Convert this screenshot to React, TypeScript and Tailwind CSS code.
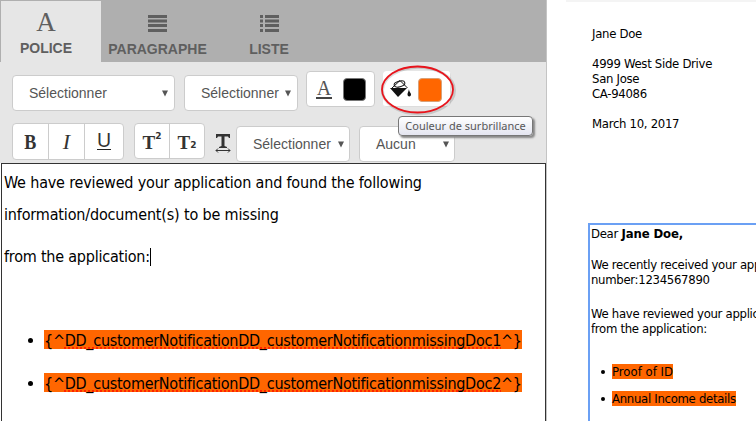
import type { ReactNode } from "react";

const tahoma = "font-['DejaVu_Sans_Condensed','DejaVu_Sans',sans-serif] [font-stretch:condensed]";

function Select({ label, className, pad = "pl-4", arrow = "mr-[5px]" }: { label: string; className: string; pad?: string; arrow?: string }) {
  return (
    <div className={`flex h-9 shrink-0 items-center justify-between rounded border border-[#ccc] bg-white ${pad} ${className}`}>
      <span className="text-[14px] leading-5 text-[#555]">{label}</span>
      <svg className={arrow} width="6" height="7" viewBox="0 0 6 7">
        <path d="M0 0.5H6L3 6.5Z" fill="#555" />
      </svg>
    </div>
  );
}

function Tab({ icon, label, className }: { icon: ReactNode; label: string; className: string }) {
  return (
    <div className={`flex shrink-0 flex-col items-center text-[14px] font-bold text-[#5f5f5f] ${className}`}>
      {icon}
      <span className="leading-4 whitespace-nowrap">{label}</span>
    </div>
  );
}

function Token({ n }: { n: number }) {
  return (
    <li className="flex h-[19px] items-center">
      <span className="mt-[2px] mr-[11px] size-[5px] rounded-full bg-black" />
      <span className="flex h-[19px] items-center bg-[#ff6600] pt-[2px] whitespace-nowrap tracking-[-0.27px]">
        <span>{"{^"}</span>
        <span className="underline decoration-[#ff2200] decoration-dotted decoration-2 underline-offset-[2px] [text-decoration-skip-ink:none]">
          DD_customerNotificationDD_customerNotificationmissingDoc{n}
        </span>
        <span>{"^}"}</span>
      </span>
    </li>
  );
}

function Toolbar() {
  return (
    <div className="h-[101px] bg-[#e6e6e6]">
      <div className="flex h-[59px] items-start pt-[9px] pl-3">
        <Select label="Sélectionner" className="mt-1 w-[163px]" arrow="mr-[6px]" />
        <Select label="Sélectionner" className="mt-1 ml-[9px] w-[114px]" arrow="mr-[6px]" />
        <div className="ml-2 flex h-9 w-[69px] items-center rounded border border-[#ccc] bg-white pl-[9px]">
          <span className="mt-[2px] flex h-[18px] w-4 flex-col items-center border-b-2 border-[#444] font-['Liberation_Serif',serif] text-[20px] leading-[15px] text-[#555]">A</span>
          <span className="ml-[11px] size-[23px] rounded border border-[#777] bg-black" />
        </div>
        <div className="relative ml-2 flex h-9 w-[68px] items-center rounded bg-white pl-[7px] shadow-[inset_-1px_-1px_0_#ddd]">
          <svg width="22" height="20" viewBox="0 0 22 20">
            <path d="M2 9L10 1.500L17.500 9" fill="none" stroke="#111" />
            <ellipse cx="9.500" cy="5" rx="5.500" ry="2.800" fill="none" stroke="#111" transform="rotate(-15 9.500 5)" />
            <path d="M0 9H17L8 18ZM19 10C19 13 21 13.500 21 15.500C21 18 17.500 18 17.500 15.500C17.500 14 18.500 12.500 19 10Z" fill="#111" />
          </svg>
          <span className="mt-[2px] ml-[6px] size-[24px] rounded border border-[#d8a078] bg-[#ff6600]" />
          <svg className="absolute -top-[7px] -left-[3px]" width="80" height="52" viewBox="0 0 80 52">
            <ellipse cx="38.500" cy="26.500" rx="36" ry="23.300" fill="none" stroke="#0002" strokeWidth="3" />
            <ellipse cx="37.500" cy="25.500" rx="35.500" ry="23" fill="none" stroke="#e8141c" strokeWidth="1.800" />
          </svg>
          <div className="absolute top-[45px] left-[15px] z-10 flex h-[20px] w-[135px] items-center justify-center rounded-sm border border-[#777] bg-linear-to-b from-white to-[#e4e5f0] font-['Noto_Sans',sans-serif] text-[11px] whitespace-nowrap text-[#575757] shadow-[2px_2px_2px_#888]">
            Couleur de surbrillance
          </div>
        </div>
      </div>
      <div className="flex items-start pt-[2px] pl-3">
        <div className="flex h-[37px] w-[112px] divide-x divide-[#ccc] rounded border border-[#ccc] bg-white text-[#333]">
          <span className="flex w-9 items-center justify-center font-['Liberation_Serif',serif] text-[22px] font-bold">
            <span className="scale-x-[.82]">B</span>
          </span>
          <span className="flex w-9 items-center justify-center font-['Liberation_Serif',serif] text-[22px] italic">I</span>
          <span className="flex w-[38px] justify-center pt-[6px] font-['Noto_Sans',sans-serif] text-[20px] leading-[20px]">
            <span className="h-[20px] border-b border-[#222]">U</span>
          </span>
        </div>
        <div className="ml-[10px] flex h-9 w-[71px] divide-x divide-[#ccc] rounded border border-[#ccc] bg-white font-['Liberation_Serif',serif] font-bold text-[#333]">
          <span className="flex w-[35px] justify-center pt-[7px] text-[19px] leading-6">
            T<span className="font-['DejaVu_Sans',sans-serif] text-[9px] leading-[11px]">2</span>
          </span>
          <span className="flex flex-1 justify-center pt-[7px] text-[19px] leading-6">
            T<span className="pt-[9px] font-['DejaVu_Sans',sans-serif] text-[9px] leading-[11px]">2</span>
          </span>
        </div>
        <svg className="mt-[11px] ml-[10px]" width="17" height="19" viewBox="0 0 17 19">
          <path d="M1 0H15V4H14L13 2.500H9.500V12L12 13V14H4V13L6.500 12V2.500H3L2 4H1Z" fill="#333" />
          <path d="M1 16.500H15M3 14.500L1 16.500L3 18.500M13 14.500L15 16.500L13 18.500" stroke="#333" fill="none" />
        </svg>
        <Select label="Sélectionner" className="mt-[3px] ml-[4px] w-[114px]" arrow="mr-[5px]" />
        <Select label="Aucun" className="mt-[3px] ml-[9px] w-[96px]" pad="pl-4" />
      </div>
    </div>
  );
}

export default function App() {
  return (
    <div className="flex h-[421px] w-[756px] overflow-hidden bg-white font-['Liberation_Sans',Arial,sans-serif]">
      <section className="w-[547px] shrink-0 border-r border-[#c4c4c4]">
        <div className="flex h-[62px] bg-[#afafaf] pt-px pl-px">
          <Tab
            label="POLICE"
            className="w-[100px] bg-[#e6e6e6] pt-[8px] pr-[10px]"
            icon={<span className="mb-[1px] h-[30px] font-['Liberation_Serif',serif] text-[27px] leading-[26px] font-normal">A</span>}
          />
          <Tab
            label="PARAGRAPHE"
            className="w-[113px] pt-[14px]"
            icon={
              <svg className="mb-[9px] shrink-0" width="19" height="17" viewBox="0 0 19 17">
                <path d="M0 1.500H19M0 6H19M0 10.500H19M0 15.500H19" stroke="#5f5f5f" strokeWidth="3" />
              </svg>
            }
          />
          <Tab
            label="LISTE"
            className="w-[110px] pt-[14px]"
            icon={
              <svg className="mb-[9px] shrink-0" width="19" height="17" viewBox="0 0 19 17">
                <path d="M0 1.500H3M0 6H3M0 10.500H3M0 15.500H3M5 1.500H19M5 6H19M5 10.500H19M5 15.500H19" stroke="#5f5f5f" strokeWidth="3" />
              </svg>
            }
          />
        </div>
        <Toolbar />
        <div className={`ml-px h-[260px] border border-b-0 border-[#333] bg-white pt-[3px] pl-[2px] text-[16px] tracking-[-0.18px] text-black ${tahoma}`}>
          <p className="h-8 leading-8 whitespace-nowrap">We have reviewed your application and found the following</p>
          <p className="h-8 leading-8 tracking-[-0.16px] whitespace-nowrap">information/document(s) to be missing</p>
          <p className="mt-[10px] flex h-8 items-center tracking-[-0.22px] whitespace-nowrap">
            <span>from the application:</span>
            <span className="h-[18px] w-px bg-black" />
          </p>
          <ul className="mt-[57px] flex flex-col gap-6 pl-6">
            <Token n={1} />
            <Token n={2} />
          </ul>
        </div>
      </section>
      <section className={`w-[209px] pl-[19px] text-[13px] leading-[15px] tracking-[-0.3px] whitespace-nowrap text-black ${tahoma}`}>
        <div className="h-[2px] bg-[#f4f4f4]" />
        <div className="h-[221px] pt-[24px] pl-[26px]">
          <p>Jane Doe</p>
          <p className="mt-[15px]">4999 West Side Drive</p>
          <p>San Jose</p>
          <p>CA-94086</p>
          <p className="mt-[15px]">March 10, 2017</p>
        </div>
        <div className="ml-[22px] h-[198px] border-t-2 border-l-2 border-[#6ba0f4] pt-[1px] pl-px">
          <p>Dear <b className="tracking-[-0.1px]">Jane Doe,</b></p>
          <p className="mt-[16px]">We recently received your app</p>
          <p>number:1234567890</p>
          <p className="mt-[19px]">We have reviewed your applic</p>
          <p>from the application:</p>
          <ul className="mt-[28px] flex flex-col gap-3 pl-[10px]">
            <li className="flex items-center">
              <span className="mr-[7px] size-1 rounded-full bg-black" />
              <span className="bg-[#ff6600] tracking-normal">Proof of ID</span>
            </li>
            <li className="flex items-center">
              <span className="mr-[7px] size-1 rounded-full bg-black" />
              <span className="bg-[#ff6600]">Annual Income details</span>
            </li>
          </ul>
        </div>
      </section>
    </div>
  );
}
